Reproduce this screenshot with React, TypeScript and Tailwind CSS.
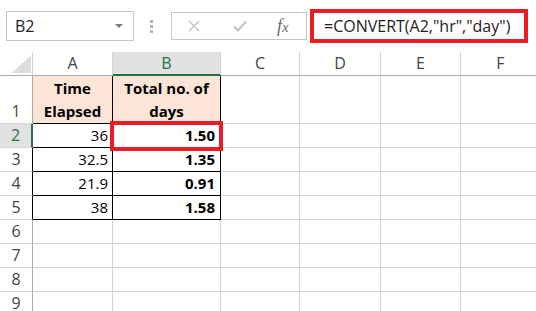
import React from 'react'

const font = { fontFamily: '"Open Sans", "Noto Sans", sans-serif' }

function RowHead({ n, active, h = 'h-[24px]', edge = 'border-r-[#ababab]' }: { n: number; active?: boolean; h?: string; edge?: string }) {
  if (active) {
    return (
      <div className={`w-[33px] ${h} shrink-0 flex items-end justify-center bg-[#e1e1e1] border-b border-b-[#d4d4d4] border-r-2 border-r-[#217346] text-[#217346] text-[16px] leading-[23px]`}>
        {n}
      </div>
    )
  }
  return (
    <div className={`w-[33px] ${h} shrink-0 flex items-end justify-center border-b border-b-[#d4d4d4] border-r ${edge} text-[#444] text-[16px] leading-[23px]`}>
      {n}
    </div>
  )
}

function EmptyCells() {
  return (
    <>
      <div className="w-[79px] shrink-0 border-r border-b border-[#d4d4d4]" />
      <div className="w-[81px] shrink-0 border-r border-b border-[#d4d4d4]" />
      <div className="w-[80px] shrink-0 border-r border-b border-[#d4d4d4]" />
      <div className="w-[80px] shrink-0 border-r border-b border-[#d4d4d4]" />
    </>
  )
}

const data = [
  { n: 3, a: '32.5', b: '1.35' },
  { n: 4, a: '21.9', b: '0.91' },
  { n: 5, a: '38', b: '1.58' },
]

export default function App() {
  return (
    <div className="w-[536px] h-[311px] overflow-hidden bg-white text-black" style={font}>
      {/* name box + formula bar */}
      <div className="h-[52px] flex items-center">
        <div className="ml-[6px] w-[128px] h-[30px] border border-[#c6c6c6] flex items-center justify-between pl-[8px] pr-[10px]">
          <span className="text-[16px] text-[#222]">B2</span>
          <svg width="8" height="5" viewBox="0 0 8 5"><path d="M0 0h8L4 4z" fill="#7a7a7a" /></svg>
        </div>
        <div className="ml-[16px] flex flex-col gap-[2px]">
          <div className="w-[3px] h-[3px] bg-[#b4b4b4]" />
          <div className="w-[3px] h-[3px] bg-[#b4b4b4]" />
          <div className="w-[3px] h-[3px] bg-[#b4b4b4]" />
        </div>
        <div className="ml-[18px] w-[136px] h-[28px] border border-[#c6c6c6] flex items-center">
          <svg className="ml-[16px]" width="12" height="12" viewBox="0 0 12 12">
            <path d="M1 1L11 11M11 1L1 11" stroke="#c2c2c2" strokeWidth="1.4" />
          </svg>
          <svg className="ml-[33px]" width="14" height="12" viewBox="0 0 14 12">
            <path d="M1 6.5L5 10.5L13 1.5" stroke="#c2c2c2" strokeWidth="2" fill="none" />
          </svg>
          <span className="ml-[30px] text-[18px] italic text-[#6a6a6a]" style={{ fontFamily: '"Liberation Serif", serif' }}>
            f<span className="text-[15px]">x</span>
          </span>
        </div>
        <div className="ml-[3px] w-[218px] h-[34px] border-4 border-[#ed1c24] flex items-center pl-[10px]">
          <span className="text-[16px] text-[#222] whitespace-nowrap">=CONVERT(A2,"hr","day")</span>
        </div>
      </div>

      {/* column headers */}
      <div className="flex h-[24px]">
        <div className="w-[33px] shrink-0 border-r border-[#d4d4d4] border-b border-b-[#ababab] flex items-end justify-end pr-[1px] pb-[2px]">
          <svg width="19" height="18" viewBox="0 0 19 18"><path d="M19 0V18H0z" fill="#dcdcdc" /></svg>
        </div>
        <div className="w-[80px] shrink-0 border-r border-[#d4d4d4] border-b border-b-[#ababab] text-center text-[16px] leading-[23px] text-[#444]">A</div>
        <div className="w-[108px] shrink-0 border-r border-[#d4d4d4] border-b-2 border-b-[#217346] bg-[#e1e1e1] text-center text-[16px] leading-[22px] text-[#217346]">B</div>
        <div className="w-[79px] shrink-0 border-r border-[#d4d4d4] border-b border-b-[#ababab] text-center text-[16px] leading-[23px] text-[#444]">C</div>
        <div className="w-[81px] shrink-0 border-r border-[#d4d4d4] border-b border-b-[#ababab] text-center text-[16px] leading-[23px] text-[#444]">D</div>
        <div className="w-[80px] shrink-0 border-r border-[#d4d4d4] border-b border-b-[#ababab] text-center text-[16px] leading-[23px] text-[#444]">E</div>
        <div className="w-[80px] shrink-0 border-r border-[#d4d4d4] border-b border-b-[#ababab] text-center text-[16px] leading-[23px] text-[#444]">F</div>
      </div>

      {/* row 1 */}
      <div className="flex h-[48px]">
        <RowHead n={1} h="h-[48px]" />
        <div className="w-[80px] shrink-0 bg-[#fce4d6] border-r border-r-black border-b border-b-black flex flex-col items-center justify-end text-[15px] font-bold leading-[23px]">
          <span>Time</span>
          <span>Elapsed</span>
        </div>
        <div className="w-[108px] shrink-0 bg-[#fce4d6] border-r border-r-black border-b border-b-black flex flex-col items-center justify-end text-[15px] font-bold leading-[23px] whitespace-nowrap">
          <span>Total no. of</span>
          <span>days</span>
        </div>
        <EmptyCells />
      </div>

      {/* row 2 */}
      <div className="flex h-[24px]">
        <RowHead n={2} active />
        <div className="w-[80px] shrink-0 border-r border-b border-black flex items-center justify-end pr-[4px] text-[15px]">36</div>
        <div className="relative w-[108px] shrink-0 border-r border-b border-black flex items-center justify-end pr-[5px] text-[15px] font-bold">
          1.50
          <div className="absolute -left-[3px] -top-[3px] w-[113px] h-[30px] border-4 border-[#ed1c24]" />
        </div>
        <EmptyCells />
      </div>

      {data.map((r) => (
        <div key={r.n} className="flex h-[24px]">
          <RowHead n={r.n} edge="border-r-black" />
          <div className="w-[80px] shrink-0 border-r border-b border-black flex items-center justify-end pr-[4px] text-[15px]">{r.a}</div>
          <div className="w-[108px] shrink-0 border-r border-b border-black flex items-center justify-end pr-[5px] text-[15px] font-bold">{r.b}</div>
          <EmptyCells />
        </div>
      ))}

      {[6, 7, 8, 9].map((n) => (
        <div key={n} className="flex h-[24px]">
          <RowHead n={n} />
          <div className="w-[80px] shrink-0 border-r border-b border-[#d4d4d4]" />
          <div className="w-[108px] shrink-0 border-r border-b border-[#d4d4d4]" />
          <EmptyCells />
        </div>
      ))}
    </div>
  )
}
